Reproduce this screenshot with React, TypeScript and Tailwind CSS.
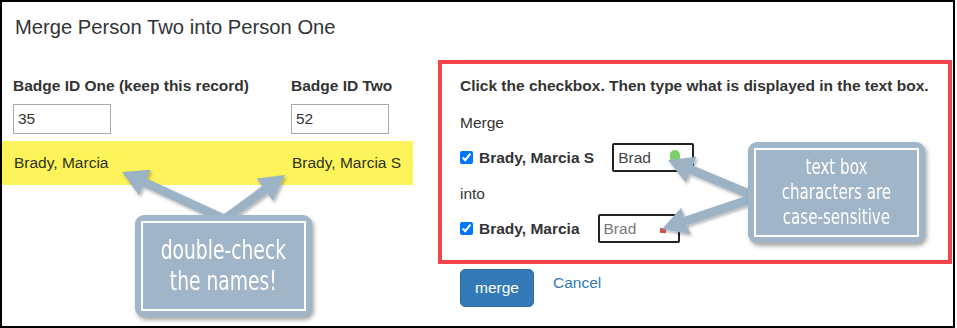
type Pt = [number, number];

// polygon for a straight arrow with a triangular head
function arrowPoints(from: Pt, to: Pt, shaft = 9, headLen = 25, headW = 28) {
    const dx = to[0] - from[0];
    const dy = to[1] - from[1];
    const len = Math.hypot(dx, dy);
    const ux = dx / len;
    const uy = dy / len;
    const nx = -uy;
    const ny = ux;
    const bx = to[0] - ux * headLen;
    const by = to[1] - uy * headLen;
    const pts: Pt[] = [
        [from[0] + (nx * shaft) / 2, from[1] + (ny * shaft) / 2],
        [bx + (nx * shaft) / 2, by + (ny * shaft) / 2],
        [bx + (nx * headW) / 2, by + (ny * headW) / 2],
        to,
        [bx - (nx * headW) / 2, by - (ny * headW) / 2],
        [bx - (nx * shaft) / 2, by - (ny * shaft) / 2],
        [from[0] - (nx * shaft) / 2, from[1] - (ny * shaft) / 2],
    ];
    return pts.map((p) => p.map((v) => v.toFixed(1)).join(',')).join(' ');
}

const ARROWS: [Pt, Pt][] = [
    [[222, 218], [122, 172]],
    [[226, 218], [285, 175]],
    [[754, 196], [668, 160]],
    [[754, 198], [662, 229]],
];

function Callout({ className, textClass, lines }: { className: string; textClass: string; lines: string[] }) {
    return (
        <div className={`absolute rounded-[9px] bg-[#a0b5c7] p-[6px] shadow-[2px_3px_4px_rgba(0,0,0,0.35)] ${className}`}>
            <div className="h-full border-2 border-white flex items-center justify-center">
                <div className={`text-center text-white scale-x-[0.8] font-['DejaVu_Sans_Condensed','DejaVu_Sans',sans-serif] ${textClass}`}>
                    {lines.map((l) => (
                        <div key={l} className="whitespace-nowrap">{l}</div>
                    ))}
                </div>
            </div>
        </div>
    );
}

export default function App() {
    return (
        <div className="relative w-[957px] h-[328px] bg-white font-['Liberation_Sans',Arial,sans-serif] text-[#333] overflow-hidden">
            <div className="w-[955px] h-[328px] border-2 border-black">
                <h1 className="pl-[13px] pt-[13px] text-[20.2px] leading-[24px] font-normal">Merge Person Two into Person One</h1>

                <div className="flex mt-[21px]">
                    <div className="w-[411px] pt-[16px] text-[15.5px]">
                        <div className="flex font-bold leading-[20px]">
                            <div className="w-[289px] pl-[11px]">Badge ID One (keep this record)</div>
                            <div>Badge ID Two</div>
                        </div>
                        <div className="flex mt-[8px]">
                            <div className="w-[289px] pl-[11px]">
                                <input readOnly value="35" className="w-[98px] h-[30px] border border-[#a9a9a9] px-[4px] outline-none" />
                            </div>
                            <div>
                                <input readOnly value="52" className="w-[98px] h-[30px] border border-[#a9a9a9] px-[4px] outline-none" />
                            </div>
                        </div>
                        <div className="flex items-center mt-[7px] h-[44px] bg-[#fdf35a] text-[#2f3320]">
                            <div className="w-[290px] pl-[12px]">Brady, Marcia</div>
                            <div>Brady, Marcia S</div>
                        </div>
                    </div>

                    <div className="ml-[25px] text-[15.5px]">
                        <div className="w-[514px] h-[204px] border-4 border-[#f24449] pl-[18px] pt-[12px]">
                            <div className="font-bold leading-[20px]">Click the checkbox. Then type what is displayed in the text box.</div>
                            <div className="mt-[17px] leading-[20px]">Merge</div>
                            <div className="flex items-center mt-[10px] h-[29px]">
                                <input type="checkbox" defaultChecked className="w-[13px] h-[13px] m-0 accent-[#0075ff]" />
                                <span className="ml-[6px] font-bold">Brady, Marcia S</span>
                                <div className="relative ml-[18px] w-[82px] h-[29px] border-2 border-[#222] rounded-[2px] flex items-center pl-[4px] text-[#444]">
                                    Brad
                                    <span className="absolute right-[12px] top-[5px] w-[10px] h-[11px] rounded-[5px_5px_3px_3px] bg-[#7fcf6a]" />
                                </div>
                            </div>
                            <div className="mt-[12px] leading-[20px]">into</div>
                            <div className="flex items-center mt-[10px] h-[29px]">
                                <input type="checkbox" defaultChecked className="w-[13px] h-[13px] m-0 accent-[#0075ff]" />
                                <span className="ml-[6px] font-bold">Brady, Marcia</span>
                                <div className="relative ml-[18px] w-[82px] h-[29px] border-2 border-[#222] rounded-[2px] flex items-center pl-[4px] text-[#777]">
                                    Brad
                                    <span className="absolute right-[12px] top-[12px] w-[6px] h-[5px] bg-[#d9534f]" />
                                </div>
                            </div>
                        </div>
                        <div className="flex mt-[5px] ml-[22px]">
                            <button className="w-[74px] h-[38px] rounded-[5px] bg-[#337ab7] border border-[#2e6da4] text-white">merge</button>
                            <a className="ml-[19px] mt-[4px] leading-[20px] text-[#337ab7]">Cancel</a>
                        </div>
                    </div>
                </div>
            </div>

            <svg className="absolute left-0 top-0 pointer-events-none" width={957} height={328}>
                <defs>
                    <filter id="sh" x="-20%" y="-20%" width="140%" height="140%">
                        <feDropShadow dx="1.5" dy="2" stdDeviation="1.5" floodColor="#000" floodOpacity="0.3" />
                    </filter>
                </defs>
                {ARROWS.map(([a, b], i) => (
                    <polygon key={i} points={arrowPoints(a, b)} fill="#9cb3c6" filter="url(#sh)" />
                ))}
            </svg>

            <Callout
                className="left-[135px] top-[215px] w-[177px] h-[102px]"
                textClass="text-[26px] leading-[31px]"
                lines={['double-check', 'the names!']}
            />
            <Callout
                className="left-[748px] top-[142px] w-[177px] h-[101px]"
                textClass="text-[21px] leading-[25px]"
                lines={['text box', 'characters are', 'case-sensitive']}
            />
        </div>
    );
}
